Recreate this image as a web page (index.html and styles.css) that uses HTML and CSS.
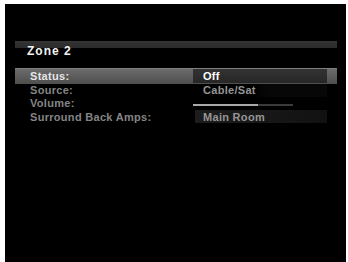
FILE: index.html
```html
<!DOCTYPE html>
<html>
<head>
<meta charset="utf-8">
<link rel="stylesheet" href="styles.css">
</head>
<body>
<div class="screen">
  <div class="panel">
    <div class="title">Zone 2</div>
    <div class="rows">
      <div class="row row-active">
        <div class="label">Status:</div>
        <div class="value value-active">Off</div>
      </div>
      <div class="row">
        <div class="label">Source:</div>
        <div class="value value-faint">Cable/Sat</div>
      </div>
      <div class="row">
        <div class="label">Volume:</div>
        <div class="value value-bar"><div class="track"><div class="fill" style="width:65%"></div></div></div>
      </div>
      <div class="row">
        <div class="label">Surround Back Amps:</div>
        <div class="value value-box">Main Room</div>
      </div>
    </div>
  </div>
</div>
</body>
</html>
```
FILE: styles.css
```css
html, body {
  margin: 0;
  padding: 0;
  background: #ffffff;
}
body {
  font-family: "Liberation Sans", Arial, sans-serif;
  font-weight: bold;
}
.screen {
  margin: 4px 0 0 5px;
  width: 341px;
  height: 258px;
  background: #000;
  padding-top: 37px;
  box-sizing: border-box;
}
.panel {
  margin-left: 10px;
  width: 322px;
}
.title {
  background: linear-gradient(#343434 0, #2c2c2c 6.5px, transparent 6.5px);
  padding: 4px 0 0 12px;
  height: 23px;
  font-size: 12px;
  line-height: 12px;
  letter-spacing: 1px;
  color: #f2f2f2;
}
.rows {
  display: flex;
  flex-direction: column;
}
.row {
  display: grid;
  grid-template-columns: 163px 134px;
  padding-left: 15px;
  height: 13.3px;
  font-size: 11px;
  line-height: 13.3px;
  letter-spacing: 0.3px;
  color: #858585;
}
.row-active {
  height: 16px;
  line-height: 16px;
  background: linear-gradient(#8a8a8a 0, #6a6a6a 1.5px, #5e5e5e 8px, #4e4e4e 16px);
  color: #e6e6e6;
}
.value {
  padding-left: 10px;
}
.value-active {
  margin: 1px 0;
  line-height: 14px;
  background: linear-gradient(#333 0, #262626 100%);
  color: #fff;
}
.value-faint {
  color: #959595;
  background: linear-gradient(90deg, transparent 0, transparent 45%, #070707 55%, #070707 100%);
}
.value-bar {
  padding-left: 0;
  display: flex;
  align-items: center;
}
.track {
  width: 100px;
  height: 2px;
  margin-top: 3px;
  background: #3a3a3a;
}
.fill {
  height: 100%;
  background: #a8a8a8;
}
.value-box {
  margin-top: -1px;
  height: 13px;
  line-height: 14px;
  margin-left: 2px;
  padding-left: 8px;
  background: linear-gradient(90deg, #1c1c1c 0, #181818 50%, #111 100%);
  color: #959595;
}
```
